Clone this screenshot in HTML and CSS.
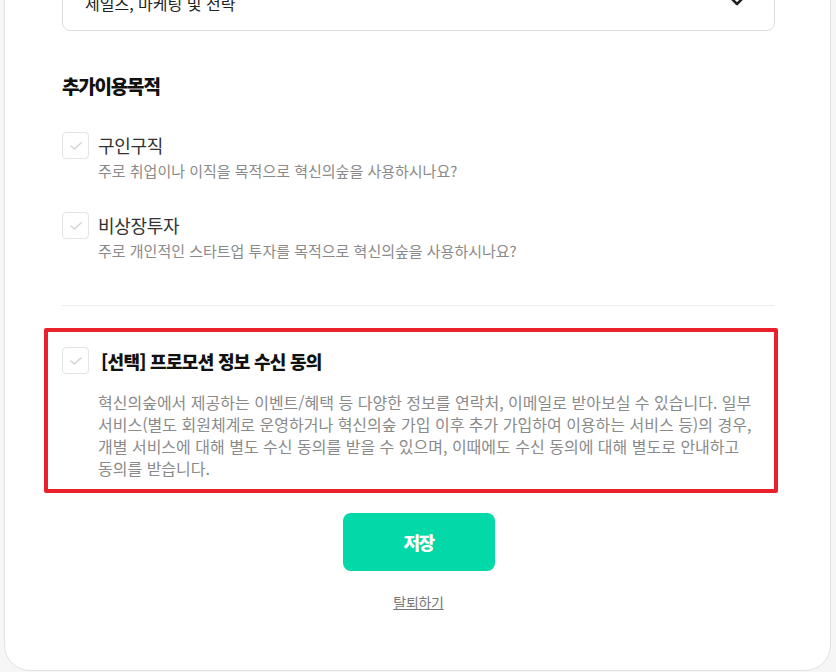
FILE: index.html
```html
<!DOCTYPE html>
<html lang="ko">
<head>
<meta charset="utf-8">
<link rel="stylesheet" href="styles.css">
</head>
<body>
<div class="card">
  <div class="select">
    <span class="select-text">세일즈, 마케팅 및 전략</span>
    <svg class="chev" width="18" height="12" viewBox="0 0 18 12"><path d="M2 2 L9 9 L16 2" fill="none" stroke="#222" stroke-width="2.6" stroke-linecap="round" stroke-linejoin="round"/></svg>
  </div>

  <h3 class="section-title">추가이용목적</h3>

  <div class="option">
    <span class="box"><svg width="14" height="10" viewBox="0 0 14 10"><path d="M2 5 L5.5 8 L12 2" fill="none" stroke="#d4d4d4" stroke-width="1.6" stroke-linecap="round" stroke-linejoin="round"/></svg></span>
    <div class="opt-text">
      <div class="opt-label">구인구직</div>
      <div class="opt-desc">주로 취업이나 이직을 목적으로 혁신의숲을 사용하시나요?</div>
    </div>
  </div>

  <div class="option second">
    <span class="box"><svg width="14" height="10" viewBox="0 0 14 10"><path d="M2 5 L5.5 8 L12 2" fill="none" stroke="#d4d4d4" stroke-width="1.6" stroke-linecap="round" stroke-linejoin="round"/></svg></span>
    <div class="opt-text">
      <div class="opt-label">비상장투자</div>
      <div class="opt-desc">주로 개인적인 스타트업 투자를 목적으로 혁신의숲을 사용하시나요?</div>
    </div>
  </div>

  <hr class="divider">

  <div class="promo">
    <div class="promo-head">
      <span class="box"><svg width="14" height="10" viewBox="0 0 14 10"><path d="M2 5 L5.5 8 L12 2" fill="none" stroke="#d4d4d4" stroke-width="1.6" stroke-linecap="round" stroke-linejoin="round"/></svg></span>
      <span class="promo-title">[선택] 프로모션 정보 수신 동의</span>
    </div>
    <p class="promo-desc">혁신의숲에서 제공하는 이벤트/혜택 등 다양한 정보를 연락처, 이메일로 받아보실 수 있습니다. 일부 서비스(별도 회원체계로 운영하거나 혁신의숲 가입 이후 추가 가입하여 이용하는 서비스 등)의 경우, 개별 서비스에 대해 별도 수신 동의를 받을 수 있으며, 이때에도 수신 동의에 대해 별도로 안내하고 동의를 받습니다.</p>
  </div>

  <div class="actions">
    <button class="save">저장</button>
    <a class="leave" href="#">탈퇴하기</a>
  </div>
</div>
</body>
</html>
```

FILE: styles.css
```css
* { box-sizing: border-box; }
html, body { margin: 0; padding: 0; }
body {
  background: #f6f6f6;
  font-family: "Noto Sans CJK KR", "Noto Sans", sans-serif;
  color: #222;
  overflow: hidden;
  height: 672px;
}
.card {
  margin: -60px 5px 0 4px;
  height: 731px;
  background: #fff;
  border: 1px solid #e2e2e2;
  border-radius: 0 0 26px 26px;
  padding: 33px 55px 0 57px;
}
.select {
  height: 57px;
  border: 1px solid #dedede;
  border-radius: 8px;
  display: flex;
  align-items: center;
  justify-content: space-between;
  padding: 0 28px 0 22px;
}
.select-text { font-size: 16px; color: #222; }
.chev { margin-top: -4px; }
.section-title {
  margin: 42px 0 0;
  font-size: 19px;
  font-weight: 900;
  letter-spacing: -1.2px;
  line-height: 26px;
  color: #111;
}
.option {
  display: flex;
  align-items: flex-start;
  margin-top: 33px;
}
.option.second { margin-top: 28px; }
.box {
  flex: none;
  width: 27px;
  height: 27px;
  border: 1px solid #e3e3e3;
  border-radius: 4px;
  display: flex;
  align-items: center;
  justify-content: center;
  background: #fff;
}
.opt-text { margin-left: 9px; }
.opt-label {
  font-size: 18px;
  line-height: 26px;
  color: #333;
  letter-spacing: -0.3px;
}
.opt-desc {
  font-size: 15px;
  line-height: 26px;
  color: #8a8a8a;
}
.divider {
  border: 0;
  border-top: 1px solid #ececec;
  margin: 41px 0 0;
}
.promo {
  margin: 22px -3px 0 -18px;
  border: 4px solid #e8212b;
  border-radius: 2px;
  padding: 15px 18px 10px 14px;
}
.promo-head {
  display: flex;
  align-items: center;
}
.promo-title {
  margin-left: 12px;
  font-size: 18px;
  font-weight: 800;
  letter-spacing: -0.7px;
  color: #111;
}
.promo-desc {
  margin: 17px 0 0 36px;
  font-size: 16px;
  line-height: 22px;
  color: #8a8a8a;
}
.actions {
  display: flex;
  flex-direction: column;
  align-items: center;
  margin-top: 20px;
}
.save {
  width: 152px;
  height: 58px;
  border: 0;
  border-radius: 8px;
  background: #02d8a8;
  color: #fff;
  font-family: inherit;
  font-size: 18px;
  font-weight: 900;
  letter-spacing: -1.5px;
}
.leave {
  margin-top: 21px;
  font-size: 14px;
  color: #777;
  text-decoration: underline;
  letter-spacing: -0.3px;
}
```
